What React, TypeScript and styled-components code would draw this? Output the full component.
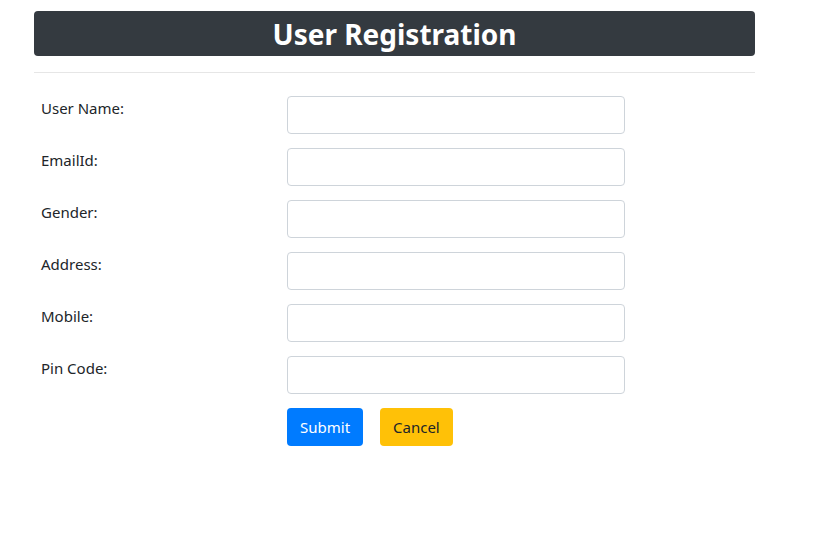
import * as React from "react";
import styled, { createGlobalStyle } from "styled-components";

const GlobalStyle = createGlobalStyle`
  body {
    margin: 0;
    background: #fff;
    font-family: "Segoe UI", "Noto Sans", "Open Sans", sans-serif;
    font-size: 15px;
    color: #212529;
  }
`;

const Page = styled.div`
  width: 721px;
  margin-left: 34px;
  padding-top: 11px;
`;

const Header = styled.h2`
  margin: 0;
  height: 45px;
  background: #343a40;
  color: #fff;
  border-radius: 4px;
  text-align: center;
  font-size: 28px;
  font-weight: 700;
  line-height: 46px;
`;

const Rule = styled.hr`
  margin: 16px 0 23px;
  border: 0;
  border-top: 1px solid #e6e6e6;
`;

const Form = styled.form`
  display: flex;
  flex-direction: column;
  gap: 14px;
  padding-left: 7px;
`;

const Row = styled.div`
  display: grid;
  grid-template-columns: 246px 338px;
  align-items: start;
`;

const Label = styled.label`
  line-height: 22px;
  padding-top: 1px;
`;

const Input = styled.input`
  box-sizing: border-box;
  height: 38px;
  width: 100%;
  border: 1px solid #ced4da;
  border-radius: 4px;
  padding: 6px 12px;
  font: inherit;
`;

const Actions = styled.div`
  display: flex;
  gap: 17px;
  margin-left: 246px;
`;

const Button = styled.button<{ $variant: "primary" | "warning" }>`
  height: 38px;
  padding: 0 13px;
  border: 0;
  border-radius: 4px;
  font: inherit;
  background: ${(p) => (p.$variant === "primary" ? "#007bff" : "#ffc107")};
  color: ${(p) => (p.$variant === "primary" ? "#fff" : "#212529")};
`;

const fields = ["User Name:", "EmailId:", "Gender:", "Address:", "Mobile:", "Pin Code:"];

export default function App() {
  return (
    <>
      <GlobalStyle />
      <Page>
        <Header>User Registration</Header>
        <Rule />
        <Form onSubmit={(e) => e.preventDefault()}>
          {fields.map((f) => (
            <Row key={f}>
              <Label>{f}</Label>
              <Input type="text" />
            </Row>
          ))}
          <Actions>
            <Button $variant="primary" type="submit">Submit</Button>
            <Button $variant="warning" type="button">Cancel</Button>
          </Actions>
        </Form>
      </Page>
    </>
  );
}
